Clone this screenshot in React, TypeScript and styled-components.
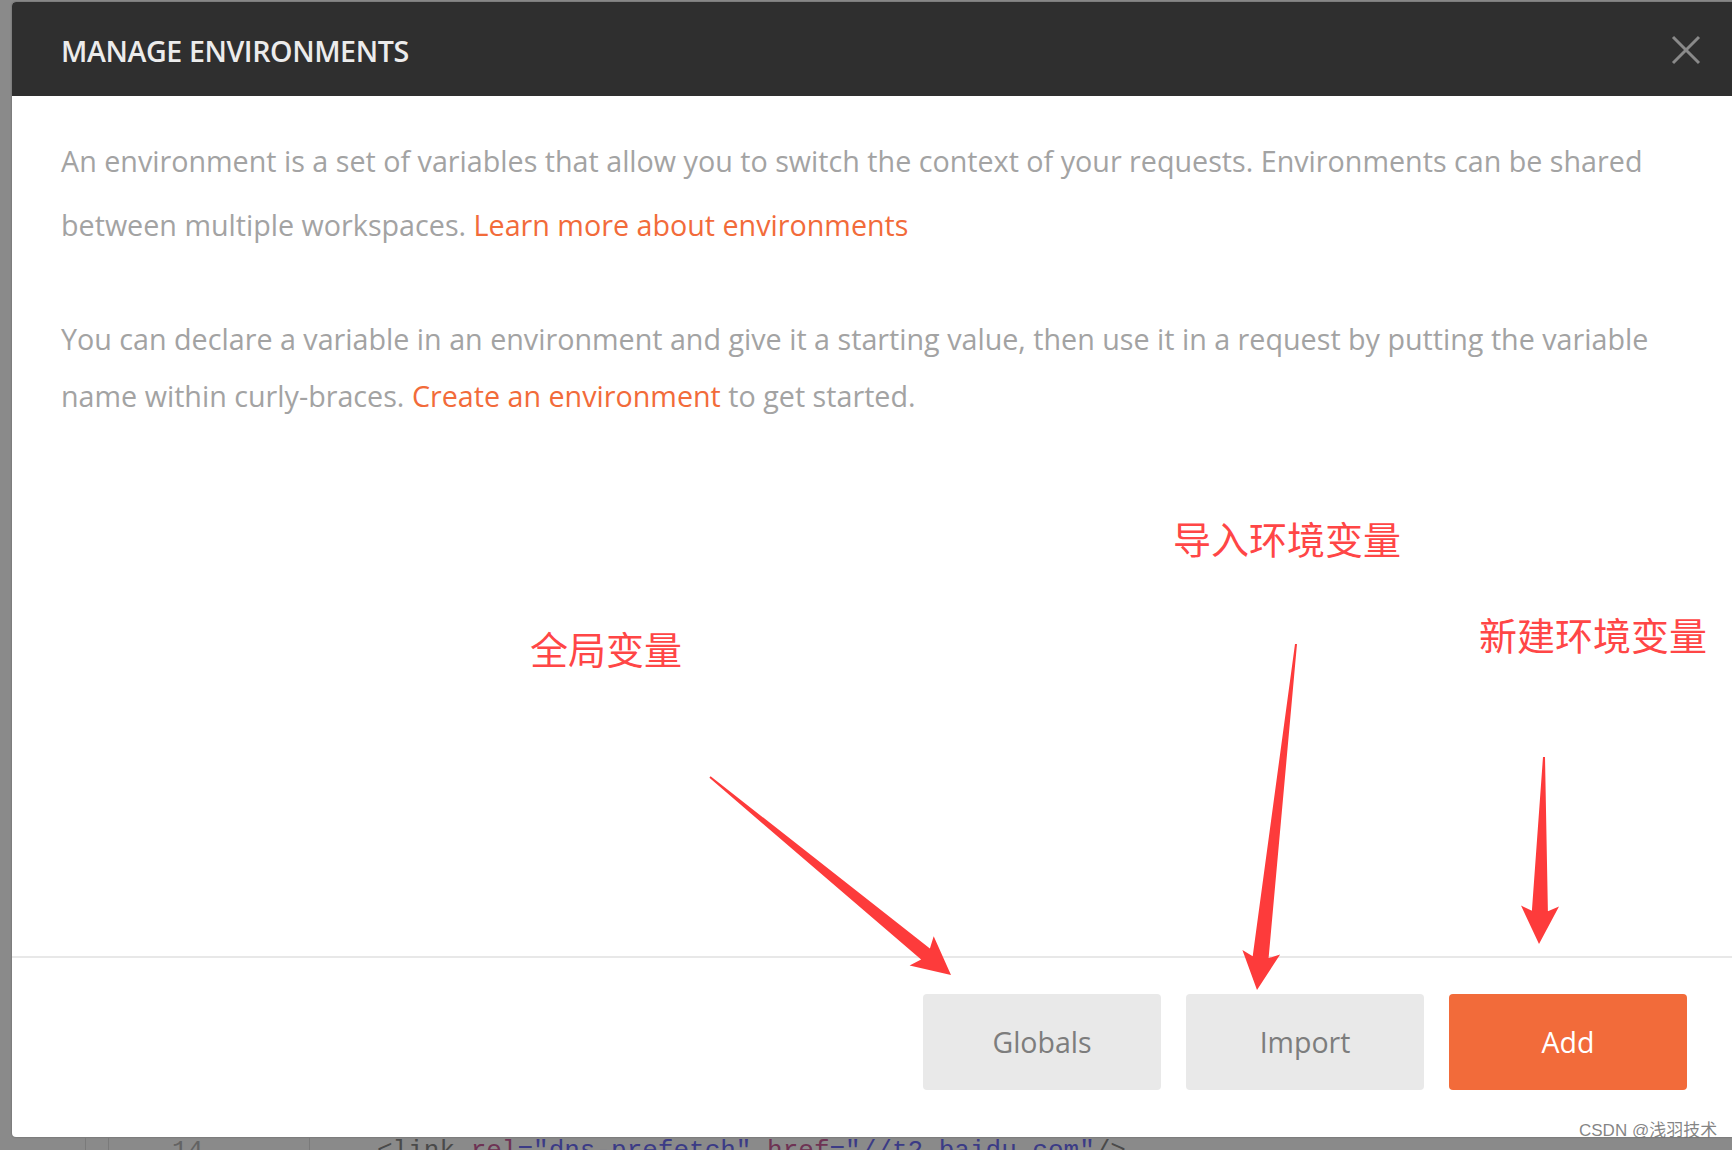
import React from "react";
import styled, { createGlobalStyle } from "styled-components";

const GlobalStyle = createGlobalStyle`
  html, body { margin: 0; padding: 0; }
  body {
    background: #8a8a8a;
    font-family: "Open Sans", "Noto Sans", sans-serif;
    overflow: hidden;
  }
  * { box-sizing: border-box; }
`;

const Page = styled.div`
  position: relative;
  width: 1732px;
  height: 1150px;
  overflow: hidden;
  display: flex;
  flex-direction: column;
  background: #8a8a8a;
`;

const Modal = styled.section`
  flex: none;
  margin: 2px 0 0 12px;
  width: 1720px;
  height: 1135px;
  background: #ffffff;
  border-radius: 4px 0 0 4px;
  display: flex;
  flex-direction: column;
  overflow: hidden;
  box-shadow: 0 0 2px rgba(0, 0, 0, 0.35);
`;

const Header = styled.header`
  flex: none;
  height: 94px;
  background: #2f2f2f;
  display: flex;
  align-items: center;
  justify-content: space-between;
  padding: 2px 31px 0 49px;
`;

const Title = styled.h1`
  margin: 0;
  font-family: "Open Sans", sans-serif;
  font-size: 28.6px;
  font-weight: 600;
  letter-spacing: -0.4px;
  color: #ececec;
`;

const CloseButton = styled.button`
  border: 0;
  padding: 0;
  background: transparent;
  width: 30px;
  height: 30px;
  display: flex;
  align-items: center;
  justify-content: center;
`;

const Body = styled.div`
  flex: 1;
  padding: 33px 40px 0 49px;
`;

const Paragraph = styled.p<{ $lh: number; $mb?: number }>`
  margin: 0 0 ${(p) => p.$mb ?? 0}px;
  font-family: "Open Sans", sans-serif;
  font-size: 28.7px;
  line-height: ${(p) => p.$lh}px;
  color: #a3a3a3;
  white-space: nowrap;
`;

const Link = styled.a`
  color: #f26b3a;
  text-decoration: none;
`;

const Footer = styled.footer`
  flex: none;
  border-top: 2px solid #e8e8e8;
  padding: 36px 45px 47px 0;
  display: flex;
  justify-content: flex-end;
  gap: 25px;
`;

const Button = styled.button<{ $primary?: boolean }>`
  width: 238px;
  height: 96px;
  border: 0;
  border-radius: 4px;
  background: ${(p) => (p.$primary ? "#f26b3a" : "#e9e9e9")};
  color: ${(p) => (p.$primary ? "#ffffff" : "#7d7d7d")};
  font-family: "Open Sans", sans-serif;
  font-size: 28.5px;
  font-weight: 400;
`;

const CodeStrip = styled.div`
  flex: none;
  height: 13px;
  overflow: hidden;
  display: flex;
  font-family: "Liberation Mono", monospace;
  font-size: 26px;
  line-height: 26px;
  padding-top: 1px;
`;

const GutterCell = styled.div<{ $w: number; $pl?: number }>`
  flex: none;
  width: ${(p) => p.$w}px;
  padding-left: ${(p) => p.$pl ?? 0}px;
  border-right: 1px solid #7a7a7a;
  color: #636363;
`;

const CodeCell = styled.div`
  padding-left: 67px;
  white-space: nowrap;
  color: #4a4a4a;
`;

const Tok = styled.span<{ $c: string }>`
  color: ${(p) => p.$c};
`;

const Overlay = styled.div`
  position: absolute;
  inset: 0;
  pointer-events: none;
`;

const Note = styled.span<{ $x: number; $y: number }>`
  position: absolute;
  left: ${(p) => p.$x}px;
  top: ${(p) => p.$y}px;
  font-family: "Noto Sans CJK SC", "Noto Sans", sans-serif;
  font-size: 38px;
  line-height: 38px;
  font-weight: 400;
  color: #ff4646;
  white-space: nowrap;
`;

const ArrowLayer = styled.svg`
  position: absolute;
  left: 0;
  top: 0;
`;

const Watermark = styled.span`
  position: absolute;
  left: 1579px;
  top: 1121px;
  font-family: "Liberation Sans", "Noto Sans CJK SC", sans-serif;
  font-size: 17px;
  line-height: 19px;
  color: rgba(110, 110, 110, 0.85);
  white-space: nowrap;
`;

function arrowPoints(
  tx: number,
  ty: number,
  px: number,
  py: number,
  shaftHalf = 8,
  headLen = 38,
  headHalf = 19
): string {
  const dx = px - tx;
  const dy = py - ty;
  const L = Math.hypot(dx, dy);
  const ux = dx / L;
  const uy = dy / L;
  const nx = -uy;
  const ny = ux;
  const bx = px - ux * headLen;
  const by = py - uy * headLen;
  const notch = 5;
  const pts: [number, number][] = [
    [tx + nx * 1, ty + ny * 1],
    [bx + nx * shaftHalf + ux * notch, by + ny * shaftHalf + uy * notch],
    [bx + nx * headHalf, by + ny * headHalf],
    [px, py],
    [bx - nx * headHalf, by - ny * headHalf],
    [bx - nx * shaftHalf + ux * notch, by - ny * shaftHalf + uy * notch],
    [tx - nx * 1, ty - ny * 1],
  ];
  return pts.map(([x, y]) => `${x.toFixed(1)},${y.toFixed(1)}`).join(" ");
}

export default function App() {
  return (
    <>
      <GlobalStyle />
      <Page>
        <Modal>
          <Header>
            <Title>MANAGE ENVIRONMENTS</Title>
            <CloseButton aria-label="Close">
              <svg width="30" height="30" viewBox="0 0 30 30">
                <path d="M2 2 L28 28 M28 2 L2 28" stroke="#8a8a8a" strokeWidth="3" fill="none" />
              </svg>
            </CloseButton>
          </Header>
          <Body>
            <Paragraph $lh={64} $mb={52.5}>
              An environment is a set of variables that allow you to switch the context of your requests. Environments can be shared
              <br />
              between multiple workspaces. <Link href="#">Learn more about environments</Link>
            </Paragraph>
            <Paragraph $lh={57}>
              You can declare a variable in an environment and give it a starting value, then use it in a request by putting the variable
              <br />
              name within curly-braces. <Link href="#">Create an environment</Link> to get started.
            </Paragraph>
          </Body>
          <Footer>
            <Button>Globals</Button>
            <Button>Import</Button>
            <Button $primary>Add</Button>
          </Footer>
        </Modal>
        <CodeStrip>
          <GutterCell $w={86} />
          <GutterCell $w={23} />
          <GutterCell $w={201} $pl={63}>14</GutterCell>
          <CodeCell>
            {"<link "}
            <Tok $c="#6e3354">rel</Tok>
            <Tok $c="#3b3b86">="dns-prefetch"</Tok>{" "}
            <Tok $c="#6e3354">href</Tok>
            <Tok $c="#3b3b86">="//t2.baidu.com"</Tok>
            {"/>"}
          </CodeCell>
        </CodeStrip>
        <Overlay>
          <Note $x={530} $y={629}>全局变量</Note>
          <Note $x={1173} $y={519}>导入环境变量</Note>
          <Note $x={1479} $y={615}>新建环境变量</Note>
          <ArrowLayer width="1732" height="1150" viewBox="0 0 1732 1150">
            <polygon points={arrowPoints(710, 777, 951, 975, 7)} fill="#fd3b3b" />
            <polygon points={arrowPoints(1296, 644, 1257, 990, 8)} fill="#fd3b3b" />
            <polygon points={arrowPoints(1544, 757, 1539, 944, 8)} fill="#fd3b3b" />
          </ArrowLayer>
          <Watermark>CSDN @浅羽技术</Watermark>
        </Overlay>
      </Page>
    </>
  );
}
